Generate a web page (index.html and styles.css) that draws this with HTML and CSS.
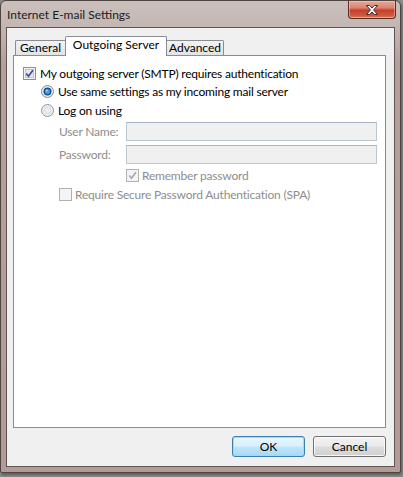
FILE: index.html
```html
<!DOCTYPE html>
<html>
<head>
<meta charset="utf-8">
<link rel="stylesheet" href="styles.css">
</head>
<body>
<div class="window">
  <div class="titlebar">
    <span class="title">Internet E-mail Settings</span>
    <div class="close">
      <svg width="16" height="12" viewBox="0 0 16 12">
        <path d="M2.5 1.5h3.2l2.3 2.6 2.3-2.6h3.2l-3.9 4.5 3.9 4.5h-3.2l-2.3-2.6-2.3 2.6h-3.2l3.9-4.5z" fill="#fff" stroke="#4a2a26" stroke-width="1" stroke-linejoin="round"/>
      </svg>
    </div>
  </div>
  <div class="client">
    <div class="tabstrip">
      <div class="tab tab-first">General</div>
      <div class="tab tab-active">Outgoing Server</div>
      <div class="tab tab-last">Advanced</div>
    </div>
    <div class="panel">
      <div class="row row-auth">
        <svg class="box" width="13" height="13" viewBox="0 0 13 13">
          <rect x="0.5" y="0.5" width="12" height="12" fill="#f4f4f4" stroke="#8e8f8f"/>
          <rect x="2.5" y="2.5" width="8" height="8" fill="#e6eaef" stroke="#bcc3cb"/>
          <path d="M3.3 6.6l2.2 2.6 4.4-6" fill="none" stroke="#3a4f8c" stroke-width="1.7"/>
        </svg>
        <span>My outgoing server (SMTP) requires authentication</span>
      </div>
      <div class="row row-radio row-radio1">
        <svg class="box" width="13" height="13" viewBox="0 0 13 13">
          <circle cx="6.5" cy="6.5" r="6" fill="#eef0f2" stroke="#7f8a93"/>
          <circle cx="6.5" cy="6.5" r="4" fill="#11508f"/>
          <circle cx="6.5" cy="6.5" r="2.6" fill="#3d9be0"/>
          <circle cx="5.8" cy="5.6" r="1.1" fill="#9fd3f7"/>
        </svg>
        <span>Use same settings as my incoming mail server</span>
      </div>
      <div class="row row-radio row-radio2">
        <svg class="box" width="13" height="13" viewBox="0 0 13 13">
          <circle cx="6.5" cy="6.5" r="6" fill="#eef0f2" stroke="#8e969d"/>
          <circle cx="6.5" cy="6.5" r="4" fill="#dde1e5"/>
          <circle cx="6.5" cy="6.5" r="2.5" fill="#eceff1"/>
        </svg>
        <span>Log on using</span>
      </div>
      <div class="login">
        <span class="label">User Name:</span>
        <div class="input"></div>
        <span class="label">Password:</span>
        <div class="input"></div>
        <div class="row row-remember">
          <svg class="box" width="13" height="13" viewBox="0 0 13 13">
            <rect x="0.5" y="0.5" width="12" height="12" fill="#f4f4f4" stroke="#b1b1b1"/>
            <path d="M3.3 6.6l2.2 2.6 4.4-6" fill="none" stroke="#a6a6a6" stroke-width="1.5"/>
          </svg>
          <span class="disabled">Remember password</span>
        </div>
      </div>
      <div class="row row-spa">
        <svg class="box" width="13" height="13" viewBox="0 0 13 13">
          <rect x="0.5" y="0.5" width="12" height="12" fill="#f4f4f4" stroke="#b1b1b1"/>
        </svg>
        <span class="disabled">Require Secure Password Authentication (SPA)</span>
      </div>
    </div>
    <div class="buttons">
      <div class="btn btn-default">OK</div>
      <div class="btn">Cancel</div>
    </div>
  </div>
</div>
</body>
</html>
```

FILE: styles.css
```css
html, body {
  margin: 0;
  padding: 0;
}
body {
  width: 403px;
  height: 477px;
  background: #8e8a89;
  font-family: Lato, "Noto Sans", sans-serif;
  font-size: 12px;
  color: #000;
  overflow: hidden;
}
.window {
  box-sizing: border-box;
  width: 401px;
  height: 473px;
  border: 1px solid #4e4442;
  border-radius: 6px 6px 2px 2px;
  background: linear-gradient(180deg, #cbc0bd 0px, #c3b6b2 27px, #b59f9b 60px, #b39c97 100%);
  padding: 0 5px 5px 5px;
  display: flex;
  flex-direction: column;
  box-shadow: 1px 2px 3px rgba(0,0,0,0.35);
}
.titlebar {
  height: 26px;
  display: flex;
  align-items: flex-start;
  justify-content: space-between;
}
.title {
  margin-top: 6px;
  margin-left: 1px;
  font-size: 12px;
  color: #1b1b1b;
  line-height: 16px;
}
.close {
  width: 48px;
  height: 18px;
  box-sizing: border-box;
  margin-right: -1px;
  border: 1px solid #5e2a22;
  border-top: none;
  border-radius: 0 0 4px 4px;
  background: linear-gradient(180deg, #e9a89a 0%, #d9826f 40%, #c2412a 55%, #cc5a3f 85%, #e07b5c 100%);
  display: flex;
  align-items: center;
  justify-content: center;
  box-shadow: inset 0 0 0 1px rgba(255,220,210,0.45);
}
.client {
  flex: 1;
  box-sizing: border-box;
  border: 1px solid #5d5453;
  background: #f0f0f0;
  padding: 8px 8px 0 6px;
  display: flex;
  flex-direction: column;
}
.tabstrip {
  height: 19px;
  display: flex;
  align-items: flex-end;
  padding-left: 2px;
}
.tab {
  box-sizing: border-box;
  height: 15px;
  border: 1px solid #898c95;
  border-bottom: none;
  background: linear-gradient(180deg, #f3f3f3, #e3e3e3);
  font-size: 12px;
  line-height: 14px;
  text-align: center;
  color: #000;
}
.tab-first {
  width: 50px;
  border-right: none;
  border-radius: 2px 0 0 0;
}
.tab-active {
  width: 102px;
  height: 20px;
  margin-bottom: -1px;
  background: #fff;
  position: relative;
  z-index: 1;
  line-height: 16px;
  border-radius: 2px 2px 0 0;
}
.tab-last {
  width: 57px;
  border-left: none;
  border-radius: 0 2px 0 0;
}
.panel {
  box-sizing: border-box;
  width: 373px;
  height: 373px;
  border: 1px solid #898c95;
  background: #fff;
  padding: 8px 0 0 9px;
  display: flex;
  flex-direction: column;
  letter-spacing: -0.2px;
}
.row {
  display: flex;
  align-items: center;
  height: 18px;
  white-space: nowrap;
}
.row .box {
  flex: none;
  margin-right: 4px;
}
.row-radio {
  margin-left: 18px;
}
.row-radio2 {
  margin-top: 1px;
}
.login {
  display: grid;
  grid-template-columns: 67px 251px;
  grid-auto-rows: 19px;
  row-gap: 4px;
  margin-left: 36px;
  margin-top: 3px;
  align-items: center;
}
.label {
  color: #8d8d8d;
}
.input {
  box-sizing: border-box;
  height: 19px;
  border: 1px solid #bac6d3;
  border-top-color: #a9b5c2;
  background: #f0f0f0;
}
.row-remember {
  grid-column: 2;
  height: 18px;
  margin-top: -4px;
}
.row-remember .box {
  margin-right: 3px;
}
.row-spa {
  margin-left: 36px;
  margin-top: -2px;
}
.row-spa .box {
  margin-right: 3px;
}
.disabled {
  color: #8d8d8d;
}
.buttons {
  margin-top: 8px;
  width: 373px;
  display: flex;
  justify-content: flex-end;
  gap: 8px;
}
.btn {
  box-sizing: border-box;
  width: 73px;
  height: 21px;
  border: 1px solid #707070;
  border-radius: 3px;
  background: linear-gradient(180deg, #f2f2f2 0%, #ebebeb 48%, #dddddd 52%, #cfcfcf 100%);
  box-shadow: inset 0 0 0 1px rgba(255,255,255,0.8);
  display: flex;
  align-items: center;
  justify-content: center;
  font-size: 12px;
}
.btn-default {
  border-color: #3c7fb1;
  background: linear-gradient(180deg, #eaf6fd 0%, #d9f0fc 48%, #bee6fd 52%, #a7d9f5 100%);
  box-shadow: inset 0 0 0 1px #9bdcf7;
}
```
